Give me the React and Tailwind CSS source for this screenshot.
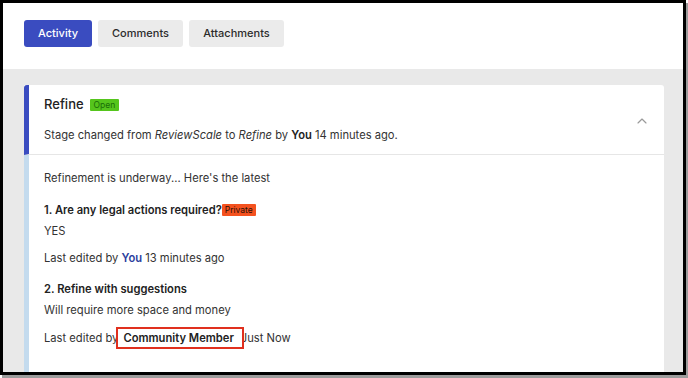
import { ChevronUp } from "lucide-react";

export default function App() {
  return (
    <div className="w-[688px] h-[378px] bg-white overflow-hidden" style={{ fontFamily: "Inter, 'Noto Sans', sans-serif" }}>
      <div className="w-[686px] h-[375px] border-[3px] border-black shadow-[2px_3px_0_#9c9c9c] flex flex-col overflow-hidden">
        {/* tabs */}
        <div className="h-[66px] shrink-0 bg-white flex gap-[6px] pl-[21px] pt-[17px]">
          <button className="h-[27px] w-[68px] rounded-[3px] bg-[#3a4cc0] text-white text-[11px] font-medium">Activity</button>
          <button className="h-[27px] w-[85px] rounded-[3px] bg-[#ebebeb] text-[#2b2b2b] text-[11px] font-medium">Comments</button>
          <button className="h-[27px] w-[95px] rounded-[3px] bg-[#ebebeb] text-[#2b2b2b] text-[11px] font-medium">Attachments</button>
        </div>

        <div className="flex-1 bg-[#e9e9e9] pl-[21px] pt-[16px] overflow-hidden">
          <div className="w-[640px] bg-white rounded-r-[3px] text-[#333]">
            {/* header */}
            <div className="h-[70px] border-l-[5px] border-[#3a4cc0] rounded-tl-[3px] pl-[15px] pr-[14px] flex items-center justify-between border-b border-b-[#e6e6e6]">
              <div>
                <div className="flex items-center gap-[6px] h-[20px] -mt-[1px]">
                  <span className="text-[13px] font-medium text-[#222]">Refine</span>
                  <span className="h-[12px] px-[4px] bg-[#55c51c] text-[#1a6e08] text-[8.5px] leading-[12px] rounded-[1px]">Open</span>
                </div>
                <div className="mt-[12px] text-[11.2px] text-[#333]">
                  Stage changed from <i>ReviewScale</i> to <i>Refine</i> by <b className="font-semibold text-[#222]">You</b> 14 minutes ago.
                </div>
              </div>
              <ChevronUp size={16} strokeWidth={1.75} className="text-[#9a9a9a] mt-[3px]" />
            </div>

            {/* body */}
            <div className="border-l-[5px] border-[#c4dbee] pl-[15px] pt-[14px] pb-[30px] text-[11.2px] text-[#333]">
              <p className="leading-[18px]">Refinement is underway... Here's the latest</p>
              <div className="mt-[14px] flex items-center leading-[18px]">
                <span className="font-semibold text-[#222]">1. Are any legal actions required?</span>
                <span className="h-[12px] px-[3px] bg-[#f4521f] text-[#2a0e06] text-[8.5px] leading-[12px] rounded-[1px]">Private</span>
              </div>
              <p className="mt-[3px] leading-[18px]">YES</p>
              <p className="mt-[9px] leading-[18px]">
                Last edited by <b className="font-semibold text-[#2c3f9e]">You</b> 13 minutes ago
              </p>
              <p className="mt-[13px] leading-[18px] font-semibold text-[#222]">2. Refine with suggestions</p>
              <p className="mt-[3px] leading-[18px]">Will require more space and money</p>
              <p className="mt-[8px] leading-[18px] flex items-center">
                <span>Last edited by</span>
                <span className="relative -ml-[2px] bg-white border-2 border-[#e0301e] h-[22px] pl-[5px] pr-[8px] flex items-center font-semibold text-[#222]">Community Member</span>
                <span className="-ml-[3px]">Just Now</span>
              </p>
            </div>
          </div>
        </div>
      </div>
    </div>
  );
}
